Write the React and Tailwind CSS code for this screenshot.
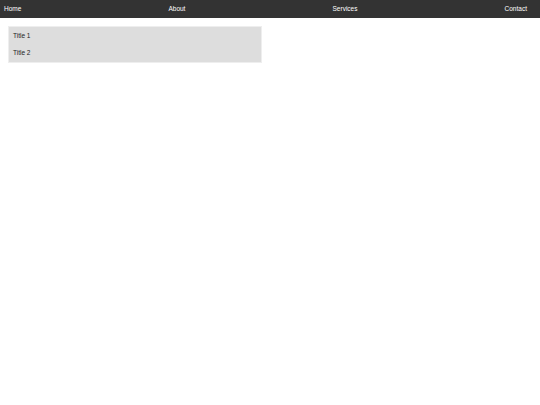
import React from "react";

export default function App() {
  const links = ["Home", "About", "Services", "Contact"];
  return (
    <div className="min-h-[405px] w-[540px] bg-white" style={{ fontFamily: '"Liberation Sans", Arial, sans-serif' }}>
      <nav className="flex h-[17.5px] items-center justify-between bg-[#333333] pl-1 pr-[13px]">
        {links.map((l) => (
          <a key={l} className="text-[6.5px] leading-none text-white">
            {l}
          </a>
        ))}
      </nav>
      <div className="mx-2 mt-[8.5px] w-[254px] border border-[#eeeeee] bg-[#dddddd] px-[4px]">
        <div className="flex h-[17.5px] items-center text-[6.5px] text-[#222222]">Title 1</div>
        <div className="flex h-[17.5px] items-center text-[6.5px] text-[#222222]">Title 2</div>
      </div>
    </div>
  );
}
